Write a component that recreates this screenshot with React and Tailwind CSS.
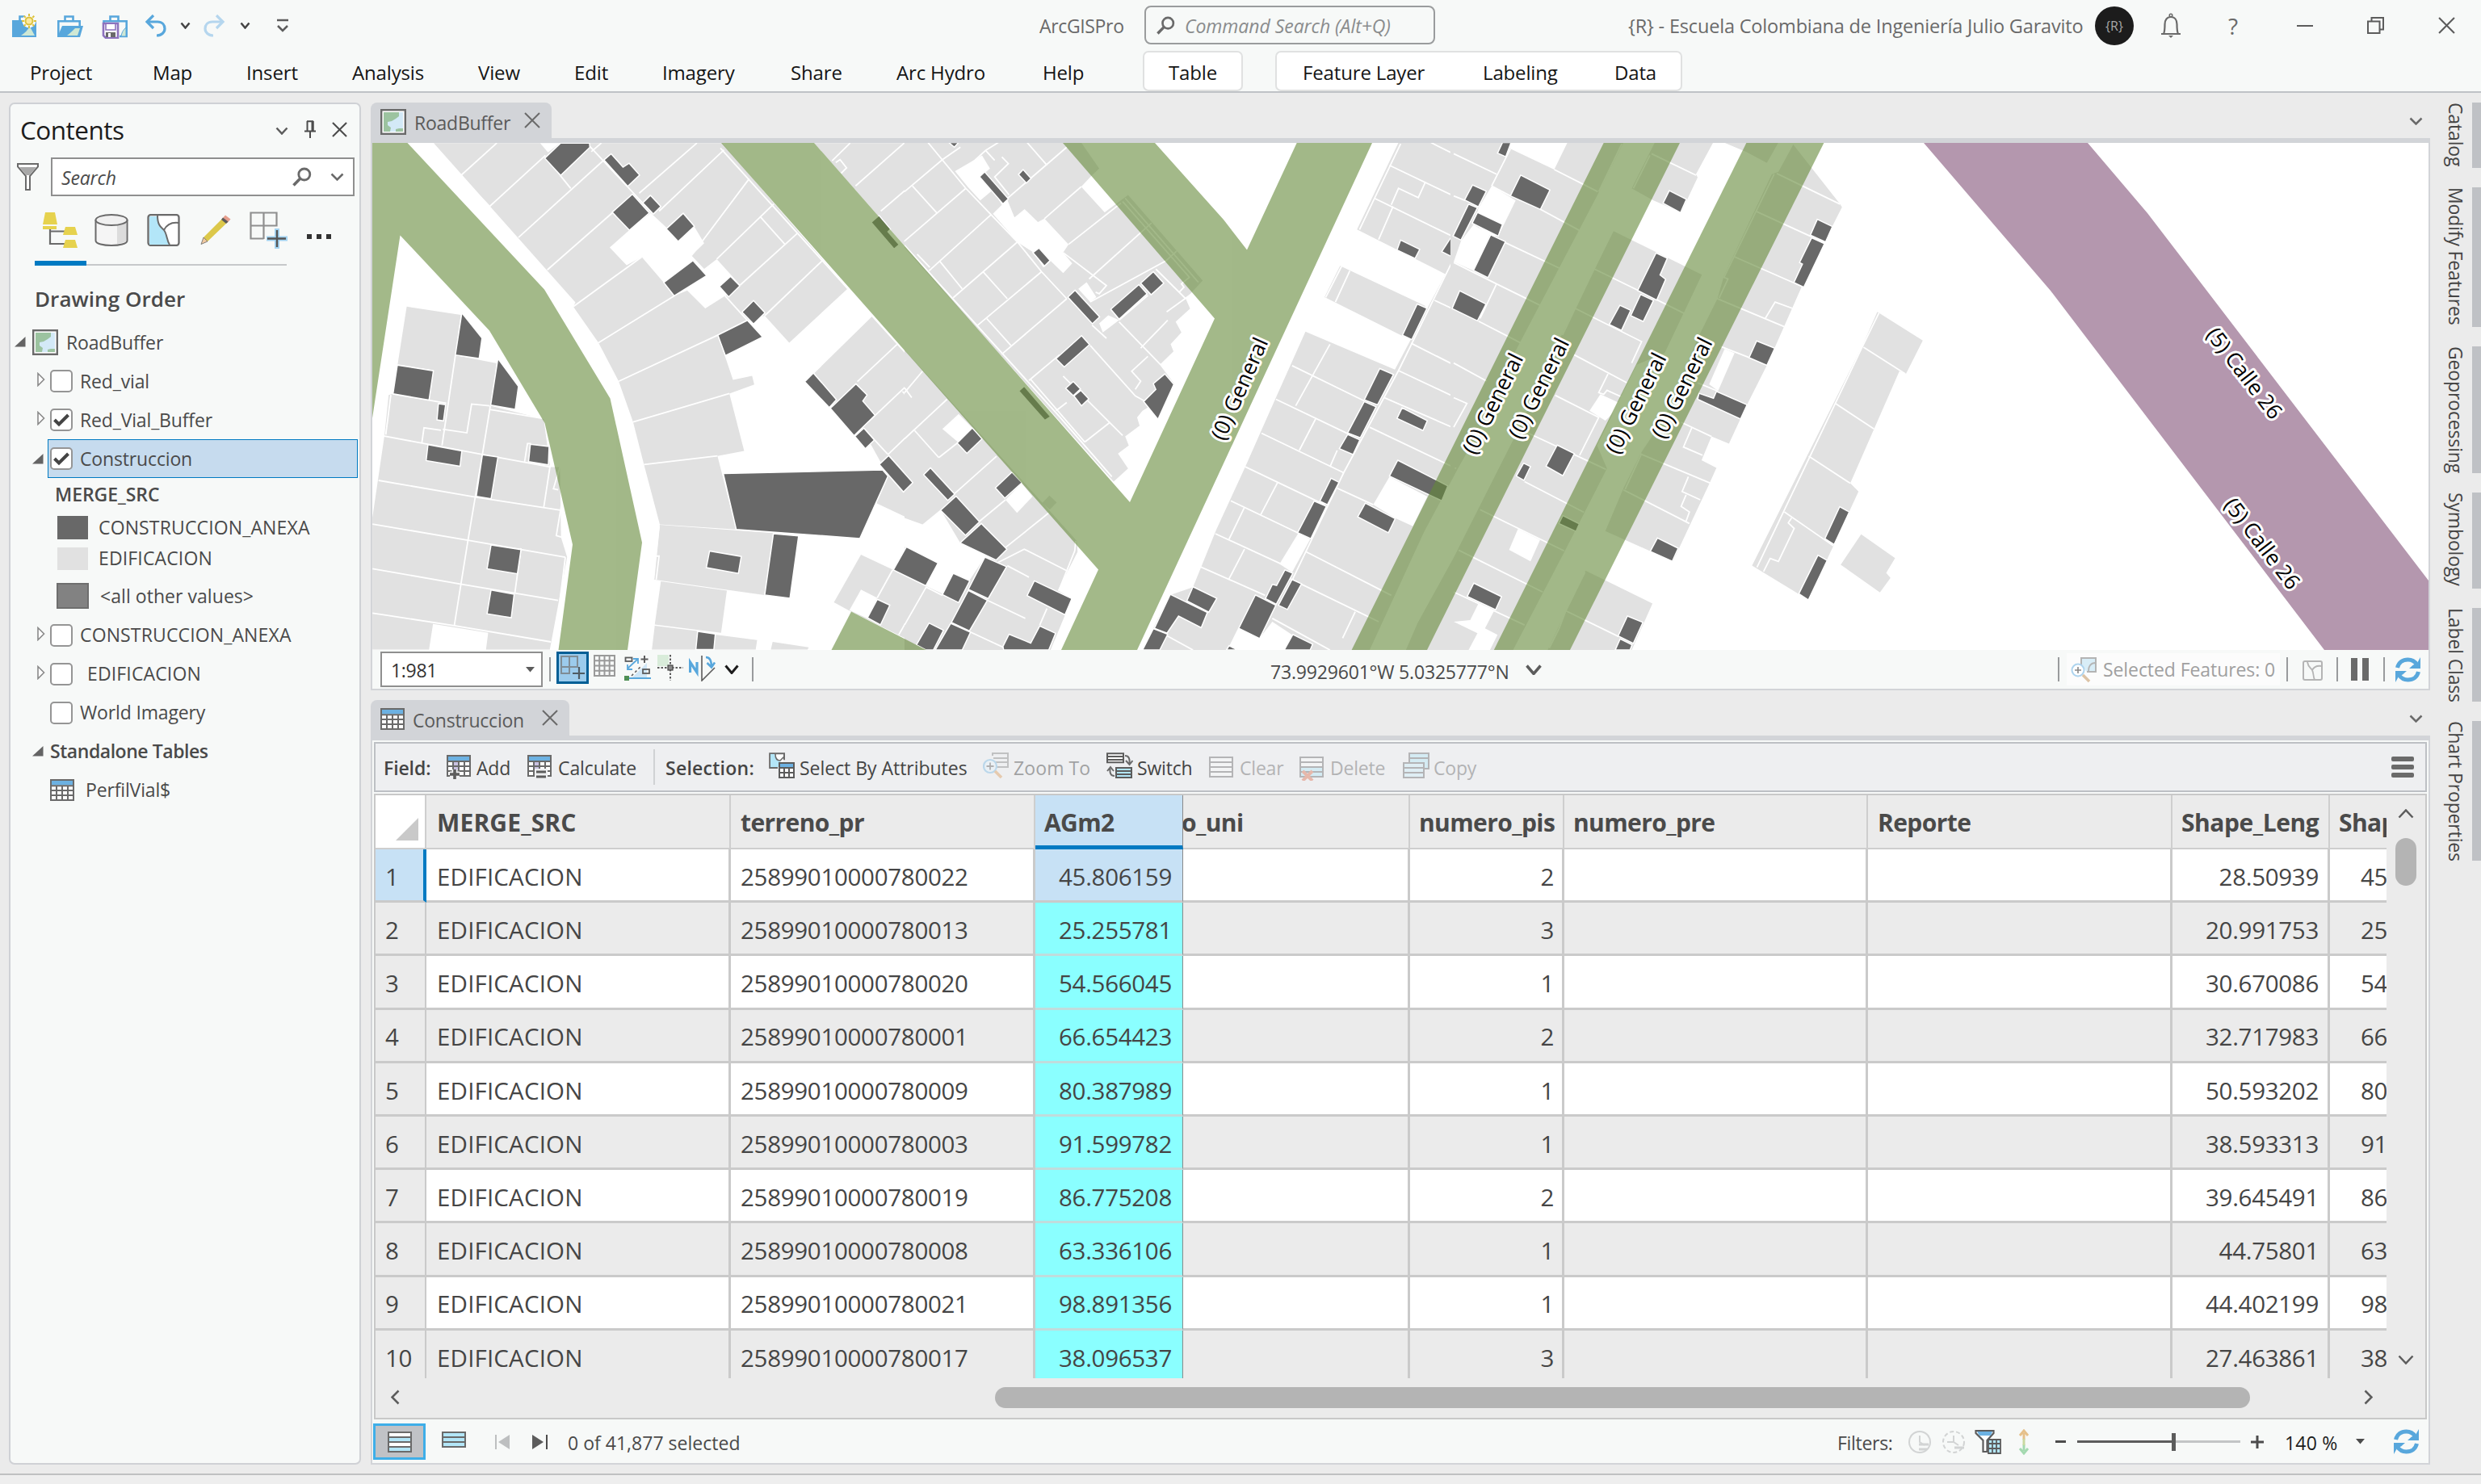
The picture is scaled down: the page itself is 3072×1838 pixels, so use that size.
import React from "react";

const FONT = "font-['Open_Sans','Noto_Sans',sans-serif]";

/* ---------- small glyphs ---------- */
const Chevron = ({ w = 16, h = 9, sw = 2.5, color = "#5c5c5c", dir = "down", className = "" }) => {
  const pts = {
    down: `1.5,1.5 ${w / 2},${h - 1.5} ${w - 1.5},1.5`,
    up: `1.5,${h - 1.5} ${w / 2},1.5 ${w - 1.5},${h - 1.5}`,
    left: `${w - 1.5},1.5 1.5,${h / 2} ${w - 1.5},${h - 1.5}`,
    right: `1.5,1.5 ${w - 1.5},${h / 2} 1.5,${h - 1.5}`,
  };
  return (
    <svg width={w} height={h} viewBox={`0 0 ${w} ${h}`} className={`shrink-0 ${className}`} fill="none" stroke={color} strokeWidth={sw}>
      <polyline points={pts[dir]} />
    </svg>
  );
};

const Cross = ({ s = 20, sw = 2.2, color = "#4c4c4c", className = "" }) => (
  <svg width={s} height={s} viewBox="0 0 20 20" className={`shrink-0 ${className}`} stroke={color} strokeWidth={sw}>
    <path d="M1 1 19 19M19 1 1 19" />
  </svg>
);

const Ico = ({ w = 32, h = 32, vw, vh, className = "", children }) => (
  <svg width={w} height={h} viewBox={`0 0 ${vw || w} ${vh || h}`} className={`shrink-0 ${className}`} fill="none">
    {children}
  </svg>
);

const Magnifier = ({ s = 24, className = "" }) => (
  <Ico w={s} h={s} vw={24} vh={24} className={className}>
    <circle cx="14.8" cy="9" r="7" stroke="#6a6a6a" strokeWidth="2.8" />
    <path d="M9.8 14 1.5 22.5" stroke="#6a6a6a" strokeWidth="3.6" />
  </Ico>
);

const MapThumb = ({ className = "" }) => (
  <Ico className={className}>
    <rect x="1.2" y="1.2" width="29.6" height="29.6" fill="#fff" stroke="#6a6a6a" strokeWidth="2.4" />
    <rect x="4" y="4" width="24" height="24" fill="#9cc3a0" />
    <path d="M23 4h5v20h-5l-4 1v3h-7l1-5-4-3v-4l5-1 5-3 4-3z" fill="#d3e9f7" />
  </Ico>
);

const TableIcon = ({ className = "" }) => (
  <Ico w={30} h={27} className={className}>
    <rect x="1" y="1" width="28" height="25" fill="#fff" stroke="#6a6a6a" strokeWidth="2" />
    <rect x="2" y="2" width="26" height="5.5" fill="#6cb1e2" />
    <path d="M1 8.2h28M1 14h28M1 20h28M8 8v18M15 8v18M22 8v18" stroke="#6a6a6a" strokeWidth="2" />
  </Ico>
);

const Refresh = ({ className = "" }) => (
  <Ico w={33} h={33} className={className}>
    <path d="M3.5 14C5 7.500 10 4 16.500 4c5 0 8.500 2 11 6" stroke="#58a7dc" strokeWidth="5" />
    <path d="M32 1v14H18l5-4.500 4.500-1.500z" fill="#58a7dc" />
    <path d="M29.500 19C28 25.500 23 29 16.500 29c-5 0-8.500-2-11-6" stroke="#58a7dc" strokeWidth="5" />
    <path d="M1 32V18h14l-5 4.500-4.500 1.500z" fill="#58a7dc" />
  </Ico>
);

const Vsep = ({ className = "" }) => <div className={`w-[2px] shrink-0 bg-[#999b9d] ${className}`} />;

/* ---------- title bar ---------- */
const Project = ({ variant }) => (
  <Ico w={34} h={32}>
    <path d="M10.500 10V4.500h10V10" stroke="#58a7dc" strokeWidth="2.6" />
    {variant === "new" && (
      <>
        <path d="M1 30V9h30v21z" fill="#58a7dc" />
        <path d="M12 28c5-3 8-7 11-11l6 11z" fill="#cfe8d4" />
        <circle cx="22" cy="10" r="8.500" fill="#f7f9f8" />
        <circle cx="22" cy="10" r="4.500" fill="#fbe9a0" stroke="#dcc23c" strokeWidth="2" />
        <path d="M22 1v3M22 16v3M13 10h3M28 10h3M15.700 3.700l2 2M26.300 14.300l2 2M15.700 16.300l2-2M26.300 5.700l2-2" stroke="#dcc23c" strokeWidth="2" />
      </>
    )}
    {variant === "open" && (
      <>
        <path d="M2.300 30V10.300h26.400V17" stroke="#58a7dc" strokeWidth="2.600" />
        <path d="M7 16h26l-4 14H1z" fill="#58a7dc" />
        <path d="M13 28c4-3 7-6 10-9l6 0-3 9z" fill="#cfe8d4" />
      </>
    )}
    {variant === "save" && (
      <>
        <path d="M2.500 14V10.300h28.200V29H22" stroke="#58a7dc" strokeWidth="2.600" />
        <path d="M24 29c1-6 3-8 6-11v11z" fill="#cfe8d4" stroke="#58a7dc" />
        <path d="M2 13h18v18H5l-3-3z" fill="#fff" stroke="#8d72bd" strokeWidth="2.600" />
        <path d="M5 14v7h12v-7" fill="#fff" stroke="#8d72bd" strokeWidth="1.600" />
        <rect x="5" y="24" width="12" height="6" fill="#6a6a6a" />
        <rect x="8" y="25" width="3" height="5" fill="#fff" />
      </>
    )}
  </Ico>
);

const Undo = ({ color, flip }) => (
  <Ico w={28} h={28} className={flip ? "-scale-x-100" : ""}>
    <path d="M3 9h13c6 0 9 4 9 8.500S21 26 15 26" stroke={color} strokeWidth="3.200" />
    <path d="M11 1 3 9l8 8" stroke={color} strokeWidth="3.200" />
  </Ico>
);

const TitleBar = () => (
  <div className="flex h-[63px] items-center text-[#6a6a6a]">
    <div className="flex w-[1287px] items-center pl-[14px]">
      <Project variant="new" />
      <div className="w-[22px]" />
      <Project variant="open" />
      <div className="w-[22px]" />
      <Project variant="save" />
      <div className="w-[19px]" />
      <Undo color="#58a7dc" />
      <Chevron w={13} h={9} className="ml-[16px]" color="#444" />
      <div className="w-[15px]" />
      <Undo color="#b5d6ee" flip />
      <Chevron w={13} h={9} className="ml-[18px]" color="#444" />
      <Ico w={16} h={18} className="ml-[32px]">
        <path d="M1 2h14" stroke="#5c5c5c" strokeWidth="2.500" />
        <path d="M2 9l6 6 6-6" stroke="#5c5c5c" strokeWidth="2.500" />
      </Ico>
    </div>
    <span className="w-[130px] pt-[2px] text-[23px] tracking-[-0.35px]">ArcGISPro</span>
    <div className="-mt-[1px] flex h-[48px] w-[360px] items-center rounded-[8px] border-2 border-[#9a9c9d] bg-[#f7f9f8] pl-[13px]">
      <Magnifier s={23} />
      <span className="ml-[12px] pt-[3px] text-[23px] italic tracking-[-0.050px] text-[#8a8c8d]">Command Search (Alt+Q)</span>
    </div>
    <span className="ml-[239px] w-[578px] whitespace-nowrap pt-[3px] text-[23.500px] tracking-[-0.170px]">{"{R}"} - Escuela Colombiana de Ingeniería Julio Garavito</span>
    <div className="flex h-[48px] w-[48px] items-center justify-center rounded-full bg-[#1c1c1c] text-[16px] text-[#a8a8a8]">{"{R}"}</div>
    <Ico w={28} h={32} className="ml-[32px]">
      <path d="M2 26h24M5 26c1-2 1.500-4 1.500-12 0-5 2.500-9 7.500-9s7.500 4 7.500 9c0 8 .5 10 1.500 12" stroke="#6a6a6a" strokeWidth="2.200" />
      <circle cx="14" cy="3" r="1.800" stroke="#6a6a6a" strokeWidth="1.500" />
      <path d="M11 28h6l-3 3z" fill="#6a6a6a" />
    </Ico>
    <span className="ml-[57px] w-[85px] text-[28px]">?</span>
    <div className="h-[2px] w-[20px] bg-[#5c5c5c]" />
    <Ico w={21} h={21} className="ml-[67px]">
      <path d="M1 5.500h14.500V20H1zM5.500 5V1H20v14.500h-4" stroke="#5c5c5c" strokeWidth="2" />
    </Ico>
    <Cross s={21} className="ml-[67px]" sw={2} color="#5c5c5c" />
  </div>
);

const tabs = [
  ["Project", "w-[152px]"],
  ["Map", "w-[116px]"],
  ["Insert", "w-[131px]"],
  ["Analysis", "w-[156px]"],
  ["View", "w-[119px]"],
  ["Edit", "w-[109px]"],
  ["Imagery", "w-[159px]"],
  ["Share", "w-[131px]"],
  ["Arc Hydro", "w-[181px]"],
  ["Help", "w-[124px]"],
];

const TabBar = () => (
  <div className="flex h-[50px] items-center pl-[37px] text-[24px] tracking-[-0.150px] text-[#151515]">
    {tabs.map(([t, w]) => (
      <span key={t} className={`${w} whitespace-nowrap pt-[4px]`}>{t}</span>
    ))}
    <div className="flex h-[50px] w-[124px] items-center justify-center rounded-[7px] border-2 border-[#e0e1e1] bg-white pt-[3px]">Table</div>
    <div className="ml-[40px] flex h-[50px] w-[504px] items-center rounded-[7px] border-2 border-[#e0e1e1] bg-white pl-[32px] pt-[3px]">
      <span className="w-[223px]">Feature Layer</span>
      <span className="w-[163px]">Labeling</span>
      <span>Data</span>
    </div>
  </div>
);

/* ---------- contents pane ---------- */
const Check = ({ on }) => (
  <div className="flex h-[28px] w-[28px] shrink-0 items-center justify-center rounded-[5px] border-2 border-[#959595] bg-white">
    {on && (
      <Ico w={22} h={20}>
        <path d="M2.500 10 8 15.500 19.500 4" stroke="#444" strokeWidth="4" />
      </Ico>
    )}
  </div>
);

const OpenTri = () => (
  <Ico w={14} h={13}>
    <path d="M13.500 0v12.500H0z" fill="#646464" />
  </Ico>
);
const ShutTri = () => (
  <Ico w={10} h={18}>
    <path d="M1 1.500 8.500 9 1 16.500z" fill="#fff" stroke="#8a8a8a" strokeWidth="1.600" />
  </Ico>
);

const Layer = ({ open, on, name, selected, bare, indent, caps }) => (
  <div className="flex h-[48px] items-center">
    <div className="flex w-[46px] justify-end">
      {bare ? null : open ? <div className="mr-[5px]"><OpenTri /></div> : <div className="-mt-1 mr-[3px]"><ShutTri /></div>}
    </div>
    <div className={`flex h-[48px] w-[384px] items-center border-[1.500px] pl-[2px] ${selected ? "border-[#007ac2] bg-[#c6dbee]" : "border-transparent"}`}>
      <Check on={on} />
      <span className={`whitespace-nowrap ${indent ? "ml-[18px]" : "ml-[9px]"} ${caps ? "tracking-[0.140px]" : ""}`}>{name}</span>
    </div>
  </div>
);

const Contents = () => (
  <div className="flex h-[1687px] w-[436px] shrink-0 flex-col rounded-[7px] border-[2px] border-[#cfd1d5] bg-[#f7f9f8] text-[23px] tracking-[-0.150px] text-[#4a4a4a]">
    <div className="flex h-[66px] items-center pl-[12px]">
      <span className="w-[316px] pb-[2px] text-[31.500px] tracking-[-0.500px] text-[#1c1c1c]">Contents</span>
      <Chevron w={16} h={10} />
      <Ico w={14} h={22} className="-mt-1 ml-[20px]">
        <path d="M3 1.200h8M3.500 1v12.500M10.500 1v12.500M0 13.500h14M7 14v8" stroke="#4c4c4c" strokeWidth="2" />
        <path d="M8.500 1h3v12h-3z" fill="#4c4c4c" />
      </Ico>
      <Cross s={19} className="-mt-[4px] ml-[20px]" />
    </div>
    <div className="flex h-[48px] items-center pl-[8px]">
      <Ico w={27} h={34}>
        <path d="M1 1h25v3.500L16 16v17h-5V16L1 4.500z" fill="#fff" stroke="#6a6a6a" strokeWidth="2" />
        <path d="M3 5h21l-8.500 10h-4z" fill="#a8a8a8" />
      </Ico>
      <div className="ml-[15px] flex h-[48px] w-[376px] items-center border-2 border-[#8f8f8f] bg-white pl-[11px]">
        <span className="w-[286px] pt-[2px] italic">Search</span>
        <Magnifier s={24} />
        <Chevron w={17} h={10} className="ml-[23px]" color="#6a6a6a" />
      </div>
    </div>
    <div className="flex h-[80px] items-center pl-[39px]">
      <Ico w={46} h={46} className="mt-1">
        <path d="M4 1h12l3 15H1zM1 18h17v4H1z" fill="#e6d24e" />
        <path d="M10 22v18h18M10 24.500h18" stroke="#6a6a6a" strokeWidth="2.200" />
        <path d="M29 19h12l3 10H26zM29 35h12l3 10H26z" fill="#e6d24e" />
      </Ico>
      <Ico w={42} h={40} className="ml-[19px] mt-1">
        <path d="M1.500 7v26c0 8 39 8 39 0V7" fill="#f5f5f5" stroke="#6a6a6a" strokeWidth="2" />
        <path d="M28 14v23c6-1 11-2 11-4V8c0 3-5 5-11 6z" fill="#dcdcdc" />
        <ellipse cx="21" cy="7.500" rx="19.500" ry="6.500" fill="#f0f0f0" stroke="#6a6a6a" strokeWidth="2" />
      </Ico>
      <Ico w={42} h={40} className="ml-[23px] mt-1">
        <rect x="1.500" y="1.200" width="38" height="37.600" rx="3" fill="#fff" stroke="#6a6a6a" strokeWidth="2.300" />
        <path d="M3 3h10c0 12 4 14 8 18 4 5 2 12 7 17H3z" fill="#b3e6f8" />
        <path d="M13 2c0 12 4 14 8 18 4 5 3 12 7 18M21 20c3-6 9-10 18-9" stroke="#6a6a6a" strokeWidth="2" />
      </Ico>
      <Ico w={40} h={40} className="ml-[23px] mt-1">
        <path d="M5 29 29 5l6 5L10 34z" fill="#dcc84a" />
        <path d="M5 29 2 37.500 10 34z" fill="#f0c9a0" stroke="#6a6a6a" strokeWidth=".8" />
        <path d="M28 6l4-4.500 6.500 5L34.500 11z" fill="#e59d8c" />
        <path d="M27 7l2-2.500 6.500 5L33 12z" fill="#5c5c5c" />
      </Ico>
      <Ico w={48} h={46} className="ml-[22px] mt-1">
        <path d="M1.500 1.500h32v16h-32zM17.500 1v33M1.500 17v16.500h16" stroke="#8f8f8f" strokeWidth="2.200" />
        <path d="M34 21v25M21 33.500h26" stroke="#a4d4f2" strokeWidth="6" />
        <path d="M34 23v21M22 33.500h23" stroke="#555" strokeWidth="2.400" />
      </Ico>
      <div className="ml-[23px] mt-[20px] flex gap-[6px]">
        <div className="size-[6px] bg-[#333]" />
        <div className="size-[6px] bg-[#333]" />
        <div className="size-[6px] bg-[#333]" />
      </div>
    </div>
    <div className="ml-[30px] flex h-[6px] w-[312px] items-end">
      <div className="h-[6px] w-[64px] bg-[#007ac2]" />
      <div className="h-[2px] flex-1 bg-[#c6c8ca]" />
    </div>
    <div className="flex h-[70px] items-center pl-[30px] pt-[11px] text-[26px] font-semibold tracking-[0.050px]">Drawing Order</div>
    <div className="flex h-[49px] items-center pl-[5px]">
      <OpenTri />
      <MapThumb className="ml-[8px]" />
      <span className="ml-[10px] pt-[2px]">RoadBuffer</span>
    </div>
    <Layer name="Red_vial" />
    <Layer name="Red_Vial_Buffer" on />
    <Layer name="Construccion" on open selected />
    <div className="flex h-[40px] items-center pl-[55px] text-[23px] font-semibold tracking-[-0.050px]">MERGE_SRC</div>
    <div className="flex h-[42px] items-center pl-[58px]">
      <div className="h-[29px] w-[38px] bg-[#686868]" />
      <span className="ml-[13px] tracking-[0.140px]">CONSTRUCCION_ANEXA</span>
    </div>
    <div className="flex h-[35px] items-center pl-[58px]">
      <div className="h-[28px] w-[38px] bg-[#e1e1e1]" />
      <span className="ml-[13px] tracking-[0.140px]">EDIFICACION</span>
    </div>
    <div className="mt-[4.500px] flex h-[49px] items-center pl-[57px]">
      <div className="h-[32px] w-[40px] border-2 border-[#6e6e6e] bg-[#828282]" />
      <span className="ml-[14px] tracking-[0.050px]">&lt;all other values&gt;</span>
    </div>
    <Layer name="CONSTRUCCION_ANEXA" caps />
    <Layer name="EDIFICACION" indent caps />
    <Layer name="World Imagery" bare />
    <div className="flex h-[48px] items-center pl-[27px]">
      <OpenTri />
      <span className="ml-[8px] text-[23px] font-semibold tracking-[-0.450px]">Standalone Tables</span>
    </div>
    <div className="flex h-[48px] items-center pl-[49px]">
      <TableIcon />
      <span className="ml-[14px]">PerfilVial$</span>
    </div>
  </div>
);

/* ---------- map geometry ---------- */
const west = {
  grey: [
    "195,16 995,16 1343,420 1181,570 1113,495 1065,508 983,549 1025,673 1078,662 1084,686 1015,711 1056,870 982,884 1034,1088 822,1074 778,908 748,790 708,677 652,570 582,470 588,458",
    "1250,655 1410,498 1575,680 1575,1062 1550,1075 1423,1015 1455,938 1395,830 1300,740",
    "1250,16 1575,16 1575,385",
    "1380,1158 1575,1250 1575,1400 1533,1405 1345,1312 1305,1290",
    "822,1075 1137,1098 1112,1270 805,1227",
    "825,1232 1008,1258 992,1375 808,1352",
    "808,1355 925,1370 925,1421 800,1421",
    "975,1380 1092,1395 1088,1421 970,1421",
    "1135,1400 1235,1415 1232,1421 1130,1421",
    "120,470 270,493 255,605 370,627 352,745 500,782 518,915 545,915 548,1110 565,1165 517,1421 340,1421 346,1375 193,1350 182,1421 25,1421 25,1055 58,830 70,715 82,712 95,630",
  ],
  white: [
    "683,306 737,258 797,210 845,255 873,288 918,248 945,294 910,328 945,365 980,338 1045,410 1003,440 948,475 898,425 862,440 833,403 772,332 730,355",
    "490,16 512,42 545,16",
    "1380,1255 1425,1278 1398,1335 1348,1312",
  ],
  lines: [
    "268,108 370,16", "350,192 505,50", "430,278 665,65", "510,368 690,210", "582,470 772,332", "652,570 862,440", "708,677 985,548 1065,508",
    "748,790 1015,711", "778,908 982,884", "625,22 735,140 800,210", "545,105 575,142", "765,155 925,16", "820,205 1000,35", "910,328 1070,115",
    "980,338 1138,185", "1045,410 1205,265", "1003,440 1065,508", "1113,495 1275,340", "1100,220 1170,298", "990,30 1343,420", "268,108 350,192",
    "632,40 660,16",
    "1480,575 1370,678", "1548,650 1400,790", "1495,705 1560,778", "1575,765 1455,880", "1528,815 1568,860", "1523,958 1568,925", "1390,810 1455,880",
    "1365,135 1500,16", "1435,205 1575,85", "1500,290 1575,228", "1520,135 1568,185", "1300,65 1350,16", "1310,70 1322,62 1340,85 1325,100",
    "1468,1200 1425,1278", "1560,1248 1485,1380",
    "95,632 195,648", "255,605 218,855", "82,712 230,738", "52,828 330,880 518,915", "352,745 330,880", "350,755 495,780", "220,810 287,820 300,740 350,745",
    "162,848 168,806 215,813", "42,952 310,998 550,1035", "330,880 290,1118 252,1355", "25,1073 290,1118 560,1165", "25,1197 272,1240 420,1265 540,1285",
    "25,1320 252,1355 520,1400", "518,910 500,1028", "437,1140 420,1265", "447,900 455,850 465,850", "545,915 527,975 540,978", "555,985 535,1105 552,1110",
    "560,1165 545,1285", "76,715 62,825", "820,1080 805,1227", "812,1162 820,1162 812,1227",
  ],
  dark: [
    "503,58 547,16 627,16 628,28 547,106", "667,63 687,46 720,83 737,72 766,105 733,136", "690,208 746,158 793,210 738,258", "775,182 796,161 825,192 804,213",
    "840,254 887,211 918,247 873,289", "833,403 914,342 952,384 862,440", "987,414 1018,386 1044,412 1013,443", "1050,485 1082,453 1114,487 1082,518",
    "983,549 1065,508 1107,554 1004,606", "998,933 1440,923 1455,940 1377,1113 1034,1088", "1137,1100 1207,1106 1183,1279 1113,1270",
    "960,1148 1048,1163 1040,1210 951,1194", "927,1371 976,1378 972,1421 922,1421", "1224,678 1248,654 1312,728 1292,750",
    "1295,752 1366,684 1397,715 1385,732 1419,771 1361,828", "1363,830 1388,807 1417,840 1392,864", "1431,908 1457,883 1524,958 1498,984",
    "1398,1333 1425,1282 1460,1298 1434,1353", "1408,236 1430,217 1462,255 1455,262 1486,298 1472,310",
    "273,487 329,557 321,614 255,604", "373,614 430,691 421,755 353,743", "94,632 194,648 182,729 82,712", "208,739 228,742 222,787 204,784",
    "179,853 273,870 268,913 174,897", "330,881 373,887 354,1003 313,996", "463,852 515,858 513,909 458,900", "354,1131 437,1144 427,1211 343,1197",
    "354,1256 418,1268 410,1333 343,1322",
  ],
};

const middle = {
  grey: [
    "0,16 490,16 540,95 520,115 490,150 555,228 620,175 827,435 780,490 792,520 752,560 768,592 738,628 746,650 708,690 748,748 705,800 660,830 645,850 652,875 612,908 622,935 592,960 620,1005 580,1045 0,335",
    "0,645 478,1225 480,1258 425,1375 464,1400 405,1556 0,1556",
    "382,1110 402,1087 422,1108 403,1130",
    "1370,16 1530,16 1530,380 1500,415 1255,280",
    "1208,390 1445,512 1385,605 1165,485",
    "1112,590 1360,705 1520,375 1640,430 1640,800 1535,1005 1440,1200 1290,1556 660,1556 735,1390 800,1365 865,1190 945,1000 1030,790",
  ],
  white: [
    "140,103 215,55 237,95 212,118 285,190 305,243 333,218 370,257 388,247 455,325 440,350 465,383 440,412 405,375 385,395 358,350 315,320 245,232 270,205 245,160 210,192 175,150",
    "482,460 505,440 532,485 515,500", "540,565 565,540 595,555 550,592",
    "0,1155 50,1175 100,1130 155,1232 255,1282 222,1275 180,1345 135,1322 105,1385 60,1362 92,1292 0,1243",
    "105,885 150,840 188,882 148,925", "280,1100 325,1050 355,1090 312,1140",
    "1345,1030 1450,1090 1410,1180 1360,1155 1300,1115", "1093,1200 1125,1220 1075,1320 1040,1295", "925,1490 985,1520 1020,1470 1075,1510 1055,1556 895,1556",
  ],
  lines: [
    "65,16 170,155 240,235 315,320 380,408 450,490", "0,165 105,68 155,30", "0,315 170,155", "22,148 90,230", "68,405 240,235", "135,487 313,318", "97,375 160,460",
    "200,573 380,408", "218,408 285,490", "270,658 450,490", "228,550 295,632", "345,738 430,660", "0,328 430,848 575,1030", "35,355 70,395",
    "270,200 450,30", "388,247 490,150", "455,325 600,200", "512,430 685,260", "440,350 560,450 540,475 530,470", "515,500 725,375 755,345", "595,555 675,480",
    "515,632 640,785 665,800", "595,560 710,690", "655,640 730,555", "697,400 780,490", "727,530 822,455", "675,665 630,710 655,740 640,765", "440,725 605,905",
    "350,735 500,925", "420,830 450,805", "500,925 570,865", "340,16 395,85", "180,85 225,40 260,16", "270,60 288,80 250,120 290,175", "225,40 250,70",
    "612,185 815,440", "605,195 790,425 768,445 775,455 762,470", "520,570 560,610",
    "0,775 50,710", "0,915 118,795", "28,890 95,972", "95,972 150,925", "135,1085 255,968", "205,1168 280,1100", "260,1290 332,1250 455,1318", "285,1300 345,1335",
    "230,1405 335,1460", "180,1500 290,1556", "395,1430 375,1480", "0,1480 60,1365 105,1390", "475,1225 472,1255 430,1370", "410,1138 478,1220", "0,760 20,790", "280,1245 400,1140",
    "1075,693 1275,800", "1030,795 1240,905", "990,898 1218,1018", "945,1000 1165,1115", "905,1103 1090,1200", "862,1203 1055,1300", "820,1303 1000,1390",
    "1180,628 1085,815", "1140,855 1095,950", "1035,1047 988,1145", "942,1125 900,1220", "943,1250 900,1340", "1370,708 1568,810", "1330,790 1540,890",
    "1290,880 1530,1005", "1405,625 1568,715", "1470,495 1568,545", "1200,1065 1300,1115", "1112,1257 1350,1390", "1070,1340 1315,1470",
    "1520,375 1370,708 1218,1018 1055,1390", "1250,1440 1215,1520", "1345,85 1565,200", "1303,185 1515,298", "1445,135 1425,183 1370,155 1350,205",
    "1355,210 1315,310", "1376,20 1262,280", "1460,16 1568,75", "1235,405 1195,500", "1555,810 1520,890", "715,1505 800,1556", "1212,392 1168,486", "1200,950 1180,1000",
    "1020,1460 1180,1556",
  ],
  dark: [
    "123,16 150,16 138,30", "208,120 222,105 288,187 273,202", "316,113 329,98 351,125 338,139", "356,350 373,336 404,374 388,391", "453,485 473,464 541,545 521,566",
    "572,522 650,447 673,475 595,552", "655,443 690,408 719,443 684,478", "420,672 491,602 513,629 443,697", "447,762 468,741 488,764 468,784",
    "470,785 489,768 511,794 491,815", "663,802 697,765 690,748 722,718 747,750 703,856", "317,770 332,755 405,848 389,859",
    "146,928 188,882 215,915 173,959", "252,1064 298,1016 326,1048 278,1095", "53,1024 72,1003 139,1083 120,1102", "-70,993 -44,966 23,1048 -3,1076",
    "100,1132 143,1089 208,1167 169,1208", "154,1231 213,1172 284,1250 254,1283", "5,1243 93,1292 59,1361 -31,1313", "135,1323 181,1346 150,1412 105,1388",
    "223,1274 283,1303 232,1400 177,1372", "177,1375 230,1405 180,1498 130,1472", "128,1475 183,1502 160,1556 85,1556", "33,1540 68,1474 108,1496 80,1556 60,1556",
    "360,1346 464,1400 445,1449 340,1391", "273,1545 290,1508 350,1535 375,1483 419,1505 400,1556 275,1556",
    "1376,312 1429,340 1416,368 1366,342", "1518,300 1544,314 1521,364 1490,347", "1422,506 1449,519 1407,614 1381,601", "1318,702 1356,720 1312,812 1275,797",
    "1275,802 1308,818 1264,912 1229,897", "1229,902 1263,918 1244,963 1206,945", "1380,821 1450,860 1438,890 1366,853", "1368,980 1507,1058 1490,1103 1345,1028",
    "1278,1110 1361,1157 1342,1200 1257,1152", "1183,1035 1205,1047 1173,1115 1152,1104", "1136,1104 1170,1120 1127,1218 1090,1200",
    "1055,1313 1077,1323 1031,1417 1001,1400 1020,1357 1032,1360", "1075,1342 1101,1355 1062,1433 1037,1420", "973,1389 1030,1420 985,1521 927,1490",
    "800,1364 866,1399 844,1441 783,1407", "737,1387 840,1442 823,1488 760,1453 728,1505 693,1490", "690,1491 730,1508 708,1556 660,1556",
    "1077,1509 1132,1538 1125,1556 1053,1556", "900,1543 925,1556 893,1556",
  ],
};

const east = {
  grey: [
    "-10,16 160,16 172,35 305,98 345,16 515,16 440,168 200,625 0,1010 -10,1010",
    "610,16 787,16 735,112 740,122 690,228 602,190 540,155",
    "485,285 753,417 640,655 555,690 435,935 465,1005 340,1250 180,1556 -145,1556 -110,1475 0,1275 205,870 320,615",
    "820,16 985,16 950,78 888,45",
    "1030,22 1172,203 1178,212 1055,455 950,692 888,815 835,930 782,908 752,980 797,1003 775,1052 665,1287 460,1195 515,1065 570,955 640,850 740,610 800,490 820,420 965,112 985,105",
    "400,1315 603,1415 540,1556 285,1556",
    "1285,530 1423,617 1372,718 1352,710 1203,1050 1228,1075 1152,1240 1075,1403 905,1300 1240,632",
    "1236,1205 1339,1277 1312,1322 1325,1337 1293,1381 1174,1297",
  ],
  white: [
    "75,215 115,148 188,192 135,300 100,295 62,260", "22,315 60,265 110,295 60,405 0,378", "445,780 510,810 460,860 412,830", "195,1188 262,1222 233,1287 168,1252",
    "75,1415 122,1438 95,1490 133,1510 110,1556 45,1556 72,1505 0,1470 50,1465", "822,642 852,655 802,770 775,750",
  ],
  lines: [
    "0,50 130,112", "172,35 115,148", "115,148 172,178", "0,178 35,192", "0,380 130,445 262,510", "262,218 380,282", "157,320 320,397", "130,445 80,550", "75,558 205,625",
    "0,685 100,740", "305,98 437,165", "0,790 40,808 0,880", "510,20 440,165",
    "600,50 735,115", "595,55 545,155", "427,400 560,465 700,535", "370,520 570,620 540,685", "365,660 525,745", "308,783 440,850 382,965", "220,895 462,1008", "215,1045 395,1138",
    "80,1130 335,1255", "15,1253 270,1380", "0,1380 215,1480", "468,718 440,775 455,780 465,768 525,795", "478,290 330,600", "700,535 650,650",
    "980,110 1172,203", "918,225 1125,320", "850,362 1062,455", "795,488 1003,575", "945,550 975,500 1030,520", "740,745 800,770", "810,635 895,668",
    "722,882 697,940 755,965", "565,960 780,1050", "515,1070 715,1172", "712,1030 693,1075 748,1100", "705,1085 690,1120 715,1137 705,1165", "972,112 820,425 832,430 805,488",
    "690,865 782,908", "570,960 520,1068", "340,1437 500,1515", "398,1320 340,1437 320,1490 290,1550",
    "1290,533 1240,635 920,1305", "1243,637 1370,718", "1158,808 1275,885", "1077,968 1203,1050", "1003,1137 1152,1240", "1025,1155 1015,1170 1033,1187 985,1287 960,1278 940,1318",
  ],
  dark: [
    "148,16 174,16 158,59 133,48", "57,145 99,164 75,211 33,190", "203,115 292,160 263,219 172,178", "72,228 148,264 135,300 56,261", "112,296 157,317 104,426 60,404",
    "-2,300 45,203 72,214 22,312", "18,466 98,506 72,557 -5,520", "654,162 706,188 688,229 635,200", "614,351 648,367 626,418 643,431 616,494 558,465",
    "567,477 606,495 575,559 537,541", "504,510 537,525 509,586 472,568", "314,934 366,960 331,1027 280,998", "212,989 233,999 213,1041 190,1028",
    "331,1148 381,1173 371,1196 319,1172", "61,1353 145,1394 127,1434 41,1393", "1103,249 1149,271 1128,318 1082,297",
    "1086,305 1125,323 1062,455 1032,441 1058,385 1049,380", "919,618 974,640 950,692 896,669", "744,777 788,792 797,771 890,812 870,855 740,795",
    "618,1216 681,1247 663,1287 596,1257", "527,1453 574,1472 545,1536 499,1513", "505,1522 541,1540 535,1556 490,1556",
    "1171,1121 1200,1137 1154,1236 1126,1218", "1105,1268 1133,1284 1076,1404 1047,1385",
  ],
};

const Parcels = ({ data, transform }) => (
  <g transform={transform}>
    {data.grey.map((p) => <polygon key={p} points={p} fill="#e1e1e1" />)}
    {data.white.map((p) => <polygon key={p} points={p} fill="#fff" />)}
    {data.lines.map((p) => <polyline key={p} points={p} fill="none" stroke="#fff" strokeWidth="1.800" vectorEffect="non-scaling-stroke" />)}
    {data.dark.map((p) => <polygon key={p} points={p} fill="#686868" stroke="#fff" strokeWidth="1.500" vectorEffect="non-scaling-stroke" />)}
  </g>
);

const labels = [
  ["(0) General", 1536, 482, -66],
  ["(0) General", 1849.5, 500.5, -63.5],
  ["(0) General", 1906.5, 481.5, -63.5],
  ["(0) General", 2026.7, 500, -63.5],
  ["(0) General", 2083.7, 481, -63.5],
  ["(5) Calle 26", 2778, 463, 52.500],
  ["(5) Calle 26", 2800, 674, 52.500],
];

const MapCanvas = () => (
  <svg width="2546" height="628" viewBox="461 177 2546 628" className="block bg-white">
    <Parcels data={west} transform="translate(450 170) scale(0.44643)" />
    <Parcels data={middle} transform="translate(1120 170) scale(0.44643 0.40816)" />
    <Parcels data={east} transform="translate(1800 170) scale(0.40816)" />
    <g fill="#668a3a" opacity="0.6">
      <path d="M461 177H504.500L674 358.500 755.500 493.500 795 672 777 805H691.500L709 674.500 674.500 524 606 409.500 495.500 291.500 461 518Z" />
      <path d="M893 177H1008L1399 622 1504 394.500 1316 177H1430L1515 272 1544 309.600 1605.700 177H1699L1408 805H1314L1360 705.500Z" />
      <path d="M1985.700 177H2080L1800 738.600 1767 805H1673.600Z" />
      <path d="M2162.400 177H2258.400L1944 805H1849.800Z" />
      <path d="M1054 757.500 1147 805H1029.500Z" />
    </g>
    <path d="M2382 177H2585L2659 264 3007 719V805H2878L2539 360Z" fill="#b497ae" />
    <g fontFamily="'Open Sans','Noto Sans',sans-serif" fontSize="26.500" textAnchor="middle" fill="#000" stroke="#fff" strokeWidth="6" strokeLinejoin="round" paintOrder="stroke">
      {labels.map(([t, x, y, a]) => (
        <text key={`${x}`} transform={`translate(${x} ${y}) rotate(${a})`} y="8">{t}</text>
      ))}
    </g>
  </svg>
);

const MapStatus = () => (
  <div className="flex h-[48px] items-center bg-[#f7f9f8] pl-[10px] text-[23px] tracking-[-0.300px] text-[#4a4a4a]">
    <div className="flex h-[44px] w-[201px] items-center border-2 border-[#8f8f8f] bg-white pl-[11px] text-[#333]">
      <span className="w-[167px] pt-[3px]">1:981</span>
      <Ico w={11} h={7}><path d="M0 0h11L5.500 6.500z" fill="#5c5c5c" /></Ico>
    </div>
    <Vsep className="ml-[8px] h-[30px]" />
    <div className="-mt-[4px] ml-[7px] flex h-[40px] w-[40px] items-center justify-center border-[3px] border-[#005e95] bg-[#9ccbec]">
      <Ico w={32} h={32}>
        <path d="M2 2h20v13H2zM12 2v20M2 15v8h11" stroke="#7f8c95" strokeWidth="2" />
        <path d="M24 15v15M16 23h15" stroke="#4f5b63" strokeWidth="2.200" />
      </Ico>
    </div>
    <Ico w={28} h={28} className="-mt-2 ml-[6px]">
      <path d="M1 1h25v25H1zM7.200 1v25M13.500 1v25M19.700 1v25M1 7.200h25M1 13.500h25M1 19.700h25" stroke="#9a9a9a" strokeWidth="2" />
    </Ico>
    <Ico w={34} h={32} className="-mt-1 ml-[10px]">
      <path d="M10 28 28 10v18z" fill="#cfe6f6" />
      <path d="M2 29h31" stroke="#58a7dc" strokeWidth="2" />
      <rect x="1.500" y="3.500" width="8" height="4.500" stroke="#5c5c5c" strokeWidth="1.800" />
      <rect x="23" y="18" width="8" height="5" stroke="#5c5c5c" strokeWidth="1.800" />
      <path d="M25 1v9M20.500 5.500h9" stroke="#5c5c5c" strokeWidth="2" />
      <path d="M4 17 17 5M11 5h6v6M4 12v6h6" stroke="#58a7dc" strokeWidth="1.800" />
      <path d="M9 26l12-12" stroke="#5c5c5c" strokeWidth="1.500" strokeDasharray="3 3" />
      <rect x="0" y="26" width="6" height="6" fill="#4f8f54" />
    </Ico>
    <Ico w={34} h={34} className="-mt-1 ml-[6px]">
      <rect x="1" y="1" width="14" height="14" fill="#d9ecda" />
      <path d="M17 1v32M1 17h32" stroke="#5c5c5c" strokeWidth="2" strokeDasharray="2.500 2" />
      <rect x="14" y="14" width="6" height="6" fill="#8a8a8a" stroke="#444" strokeWidth="1.200" />
    </Ico>
    <Ico w={34} h={34} className="-mt-1 ml-[6px]">
      <path d="M1.500 23V10L10 23V10" stroke="#58a7dc" strokeWidth="3.200" />
      <path d="M16 2v31L32 17" stroke="#5c5c5c" strokeWidth="1.600" />
      <path d="M21 4c5 0 7 4 7 12M22.500 11l5.500 5.500 4-6" stroke="#58a7dc" strokeWidth="2.600" />
    </Ico>
    <Chevron w={18} h={12} sw={3} color="#1c1c1c" className="ml-[10px]" />
    <Vsep className="ml-[16px] h-[30px]" />
    <span className="ml-[640px] w-[316px] whitespace-nowrap pt-[6px] text-[23px] tracking-[-0.180px]">73.9929601°W 5.0325777°N</span>
    <Chevron w={20} h={13} sw={3.500} />
    <Vsep className="ml-[639px] h-[30px]" />
    <div className="ml-[9px] flex h-[40px] w-[264px] items-center bg-[#fcfcfc] pl-[5px] text-[#a0a0a0]">
      <Ico w={34} h={34}>
        <path d="M13 12V3h18v17H20" fill="#d8edf7" stroke="#b4b4b4" strokeWidth="2" />
        <path d="M31 9c-7 0-9 5-9 10" stroke="#b4b4b4" strokeWidth="1.800" />
        <circle cx="9" cy="18" r="7.500" fill="#fff" stroke="#aed4ee" strokeWidth="2" />
        <path d="M9 14v8M5 18h8" stroke="#888" strokeWidth="1.600" />
        <path d="M15 24l8 8" stroke="#dcc3a5" strokeWidth="3.500" />
      </Ico>
      <span className="ml-[6px] whitespace-nowrap pt-[1px] tracking-[-0.080px]">Selected Features: 0</span>
    </div>
    <Vsep className="ml-[8px] h-[30px]" />
    <Ico w={25} h={25} className="ml-[18px] mt-[2px]">
      <rect x="1" y="1" width="23" height="23" rx="2" stroke="#b4b4b4" strokeWidth="2" />
      <path d="M6 2c1 6 4 7 6 10 2 4 1 8 3 12M12 12c2-4 6-6 12-5" stroke="#b4b4b4" strokeWidth="1.800" />
    </Ico>
    <Vsep className="ml-[17px] h-[30px]" />
    <div className="ml-[16px] flex gap-[6px]">
      <div className="h-[28px] w-[8px] bg-[#6a6a6a]" />
      <div className="h-[28px] w-[8px] bg-[#6a6a6a]" />
    </div>
    <Vsep className="ml-[18px] h-[30px]" />
    <Refresh className="ml-[12px]" />
  </div>
);

/* ---------- dock tabs ---------- */
const PaneTab = ({ icon, children, width, tail }) => (
  <div className="flex items-center justify-between">
    <div className={`flex h-[44px] items-center rounded-t-[8px] bg-[#d2d4d8] pl-[12px] text-[23px] tracking-[-0.250px] text-[#5a5a5a] ${width}`}>
      <div className="mt-[3px]">{icon}</div>
      <span className="flex-1 pl-[10px] pt-[7px]">{children}</span>
      <Cross s={20} className={tail} color="#6a6a6a" sw={2} />
    </div>
    <Chevron w={17} h={10} className="mr-[9px] mt-[2px]" color="#6a6a6a" />
  </div>
);

/* ---------- attribute table ---------- */
const Rows4 = ({ stroke = "#6a6a6a", fills = ["#fff", "#fff", "#fff", "#fff"] }) => (
  <>
    {fills.map((f, i) => (
      <rect key={i} x="1" y={1 + i * 6} width="28" height="6" fill={f} stroke={stroke} strokeWidth="2" />
    ))}
  </>
);

const Toolbar = () => (
  <div className="mx-[2px] mt-[2px] flex h-[62px] items-center border-2 border-[#bdc0c4] bg-[#eeeff1] pl-[10px] text-[23px] tracking-[-0.200px] text-[#444]">
    <span className="w-[78px] pt-[3px] font-semibold tracking-[-0.100px]">Field:</span>
    <Ico w={31} h={30}>
      <rect x="1" y="1" width="28" height="25" fill="#fff" stroke="#6a6a6a" strokeWidth="2" />
      <rect x="2" y="2" width="26" height="5" fill="#6cb1e2" />
      <rect x="8" y="8" width="8" height="12" fill="#c9c0e0" />
      <path d="M1 8h28M1 14h28M1 20h28M8 8v18M15 8v18M22 8v18" stroke="#6a6a6a" strokeWidth="2" />
      <path d="M10 18v12M4 24h12" stroke="#eeeff1" strokeWidth="7" />
      <path d="M10 18v12M4 24h12" stroke="#5c5c5c" strokeWidth="3.600" />
    </Ico>
    <span className="ml-[6px] w-[63px] pt-[3px]">Add</span>
    <Ico w={31} h={30}>
      <rect x="1" y="1" width="28" height="25" fill="#fff" stroke="#6a6a6a" strokeWidth="2" />
      <rect x="2" y="2" width="26" height="5" fill="#6cb1e2" />
      <rect x="8" y="8" width="8" height="12" fill="#c9c0e0" />
      <path d="M1 8h28M1 14h28M1 20h28M8 8v18M15 8v18M22 8v18" stroke="#6a6a6a" strokeWidth="2" />
      <rect x="9" y="17" width="16" height="13" fill="#eeeff1" />
      <path d="M11 21h12M11 27h12" stroke="#5c5c5c" strokeWidth="3" />
    </Ico>
    <span className="ml-[7px] w-[118px] pt-[3px] tracking-[-0.100px]">Calculate</span>
    <div className="h-[44px] w-[2px] bg-[#d0d2d4]" />
    <span className="ml-[13px] w-[128px] pt-[3px] font-semibold tracking-[0.250px]">Selection:</span>
    <Ico w={32} h={32} className="-mt-1">
      <path d="M11 19H1.200V1.200H19v8" fill="#fff" stroke="#6a6a6a" strokeWidth="2" />
      <path d="M2 2h5c1 7 5 7 8 10v6H2z" fill="#b3e6f8" />
      <path d="M8 2c0 7 3 8 6 8l5-5" stroke="#6a6a6a" strokeWidth="1.600" />
      <rect x="13" y="13" width="18" height="18" fill="#fff" stroke="#5c5c5c" strokeWidth="2" />
      <rect x="14" y="14" width="16" height="4" fill="#6cb1e2" />
      <path d="M13 19h18M13 25h18M19 19v12M25 19v12" stroke="#5c5c5c" strokeWidth="2" />
    </Ico>
    <span className="ml-[6px] w-[227px] whitespace-nowrap pt-[3px] tracking-[-0.030px]">Select By Attributes</span>
    <div className="flex items-center opacity-45">
      <Ico w={33} h={32} className="-mt-1">
        <path d="M12 4V1h19v17H17M13 7h18M16 12h15" stroke="#8a8a8a" strokeWidth="2" />
        <circle cx="9" cy="17" r="8" fill="#e6f3fa" stroke="#7fbce4" strokeWidth="2.200" />
        <path d="M9 12.500v9M4.500 17h9" stroke="#666" strokeWidth="1.800" />
        <path d="M15 23l8 8" stroke="#dd9f60" strokeWidth="3.600" />
      </Ico>
      <span className="ml-[5px] w-[115px] pt-[3px] tracking-[0.100px]">Zoom To</span>
    </div>
    <Ico w={33} h={32} className="-mt-1">
      <path d="M1 1.200h20v11H1zM1 5h20M1 9h20" fill="#fff" stroke="#5c5c5c" strokeWidth="2" />
      <path d="M12 19h19v12H12zM12 23h19M12 27h19" fill="#b3e6f8" stroke="#5c5c5c" strokeWidth="2" />
      <path d="M23 4c5 0 6 4 5.500 10M24 10l4.500 5 4-5M10 29c-5 0-6-4-5.500-9M1 23l4-5 4 5" stroke="#6a6a6a" strokeWidth="2" />
    </Ico>
    <span className="ml-[5px] w-[89px] pt-[3px]">Switch</span>
    <div className="flex items-center opacity-35">
      <Ico w={30} h={26}><Rows4 stroke="#4a4a4a" /></Ico>
      <span className="ml-[8px] w-[74px] pt-[3px]">Clear</span>
      <Ico w={30} h={30} className="mt-1">
        <Rows4 stroke="#4a4a4a" fills={["#fff", "#fff", "#a5e5f8", "#a5e5f8"]} />
        <path d="M4 18l12 12M16 18 4 30" stroke="#d9532c" strokeWidth="4" />
      </Ico>
      <span className="ml-[8px] w-[90px] pt-[3px]">Delete</span>
      <Ico w={33} h={32} className="-mt-1">
        <path d="M8 1h24v19H8zM8 7h24" fill="#a5e5f8" stroke="#4a4a4a" strokeWidth="2" />
        <path d="M1 13h25v18H1zM1 19h25M1 25h25" fill="#c5eefa" stroke="#4a4a4a" strokeWidth="2" />
      </Ico>
      <span className="ml-[5px] pt-[3px]">Copy</span>
    </div>
    <div className="ml-auto mr-[14px] flex flex-col gap-[4px]">
      <div className="h-[6px] w-[28px] rounded-[2px] bg-[#6a6a6a]" />
      <div className="h-[6px] w-[28px] rounded-[2px] bg-[#6a6a6a]" />
      <div className="h-[6px] w-[28px] rounded-[2px] bg-[#6a6a6a]" />
    </div>
  </div>
);

const data = [
  ["25899010000780022", "45.806159", 2, "28.50939", "45"],
  ["25899010000780013", "25.255781", 3, "20.991753", "25"],
  ["25899010000780020", "54.566045", 1, "30.670086", "54"],
  ["25899010000780001", "66.654423", 2, "32.717983", "66"],
  ["25899010000780009", "80.387989", 1, "50.593202", "80"],
  ["25899010000780003", "91.599782", 1, "38.593313", "91"],
  ["25899010000780019", "86.775208", 2, "39.645491", "86"],
  ["25899010000780008", "63.336106", 1, "44.75801", "63"],
  ["25899010000780021", "98.891356", 1, "44.402199", "98"],
  ["25899010000780017", "38.096537", 3, "27.463861", "38"],
];

const COLS = "grid grid-cols-[63px_377px_377px_183px_281px_191px_376px_377px_195px_70px]";
const CELL = "flex items-center overflow-hidden border-b-[3px] border-r-[3px] border-[#cacaca] pt-[4px]";
const HEAD = "flex items-center overflow-hidden border-b-[2px] border-r-[2px] border-[#cecece] bg-[#ebebeb] pt-[3px]";

const Grid = () => (
  <div className="flex h-[722px] text-[#454545]">
    <div className="h-[722px] w-[2490px] overflow-hidden">
      <div className={`${COLS} h-[67px] text-[30px] font-bold tracking-[-0.600px] text-[#4a4a4a]`}>
        <div className="flex items-end justify-end border-b-[2px] border-r-[2px] border-[#cecece] bg-white pb-[9px] pr-[8px]">
          <Ico w={28} h={28}><path d="M28 0v28H0z" fill="#c9c9c9" /></Ico>
        </div>
        <div className={`${HEAD} pl-[13px] tracking-[0.150px]`}>MERGE_SRC</div>
        <div className={`${HEAD} pl-[12px]`}>terreno_pr</div>
        <div className="flex items-center border-b-[5px] border-r border-b-[#007ac2] border-r-[#8a8a8a] bg-[#c7e1f5] pl-[11px] pt-[6px]">AGm2</div>
        <div className={`${HEAD}`}><span className="-ml-[2px]">o_uni</span></div>
        <div className={`${HEAD} pl-[11px]`}>numero_pis</div>
        <div className={`${HEAD} pl-[11px]`}>numero_pre</div>
        <div className={`${HEAD} pl-[12px]`}>Reporte</div>
        <div className={`${HEAD} pl-[11px] tracking-[-0.450px]`}>Shape_Leng</div>
        <div className="flex items-center overflow-hidden border-b-[2px] border-[#cecece] bg-[#ebebeb] pl-[11px] pt-[3px]">Shap</div>
      </div>
      {data.map(([t, ag, pis, len, ar], i) => {
        const bg = i % 2 ? "bg-[#ebebeb]" : "bg-white";
        return (
          <div key={t} className={`${COLS} h-[66.200px] text-[29.500px] tracking-[-0.300px]`}>
            <div className={`flex items-center border-b-[3px] border-b-[#cacaca] pl-[12px] pt-[4px] ${i === 0 ? "border-r-[4px] border-r-[#007ac2] bg-[#c7e1f5]" : "border-r-[2px] border-r-[#cacaca] bg-[#ebebeb]"}`}>{i + 1}</div>
            <div className={`${CELL} ${bg} pl-[13px] tracking-[0.170px]`}>EDIFICACION</div>
            <div className={`${CELL} ${bg} pl-[12px]`}>{t}</div>
            <div className={`flex items-center justify-end border-b-[3px] border-r border-r-[#8a8a8a] pr-[13px] pt-[4px] ${i === 0 ? "border-b-[#cacaca] bg-[#c7e1f5]" : "border-b-[#c0dcdc] bg-[#8affff]"}`}>{ag}</div>
            <div className={`${CELL} ${bg}`} />
            <div className={`${CELL} ${bg} justify-end pr-[10px]`}>{pis}</div>
            <div className={`${CELL} ${bg}`} />
            <div className={`${CELL} ${bg}`} />
            <div className={`${CELL} ${bg} justify-end pr-[11px]`}>{len}</div>
            <div className={`flex items-center overflow-hidden border-b-[3px] border-[#cacaca] pl-[38px] pt-[4px] ${bg}`}>{ar}</div>
          </div>
        );
      })}
    </div>
    <div className="flex flex-1 flex-col items-center">
      <Chevron w={20} h={12} dir="up" className="mt-[17px]" />
      <div className="mt-[24px] h-[59px] w-[26px] rounded-full bg-[#b4b4b4]" />
      <Chevron w={20} h={12} className="mb-[17px] mt-auto" />
    </div>
  </div>
);

const Footer = () => (
  <div className="flex h-[55px] items-center pl-[1px] text-[23px] tracking-[-0.300px] text-[#4a4a4a]">
    <div className="flex h-[45px] w-[65px] items-center justify-center border-[3px] border-[#3eaee8] bg-[#c0c2c6]">
      <Ico w={30} h={26}><Rows4 fills={["#fff", "#b3e6f8", "#fff", "#b3e6f8"]} /></Ico>
    </div>
    <Ico w={30} h={20} className="-mt-[5px] ml-[20px]"><Rows4 fills={["#b3e6f8", "#b3e6f8", "#b3e6f8"]} /></Ico>
    <Ico w={19} h={18} className="ml-[36px]"><path d="M1 0v18" stroke="#bdbfc0" strokeWidth="2" /><path d="M18 0v18L4 9z" fill="#bdbfc0" /></Ico>
    <Ico w={19} h={18} className="ml-[27px]"><path d="M18 0v18" stroke="#4c4c4c" strokeWidth="2" /><path d="M0 0v18L14 9z" fill="#5c5c5c" /></Ico>
    <span className="ml-[25px] pt-[4px] tracking-[0.020px]">0 of 41,877 selected</span>
    <div className="ml-auto flex h-[55px] w-[732px] items-center">
      <span className="w-[89px] pt-[4px]">Filters:</span>
      <Ico w={30} h={30} className="-ml-[2px] opacity-70">
        <circle cx="15" cy="15" r="13" stroke="#c3c5c6" strokeWidth="2" /><path d="M15 7v8l6 4" stroke="#c3c5c6" strokeWidth="2" /><path d="M14 18h12M14 24h10" stroke="#c3c5c6" strokeWidth="3" />
      </Ico>
      <Ico w={30} h={30} className="ml-[12px] opacity-70">
        <circle cx="15" cy="15" r="13" stroke="#c3c5c6" strokeWidth="2" strokeDasharray="5 3" /><path d="M15 7v8l6 4M7 15h9" stroke="#c3c5c6" strokeWidth="2" /><path d="M16 22h12" stroke="#c3c5c6" strokeWidth="3" />
      </Ico>
      <Ico w={34} h={32} className="ml-[11px]">
        <path d="M1.500 2h22v3l-8 9v14h-5V14l-9-9z" fill="#fff" stroke="#5c5c5c" strokeWidth="2.200" />
        <path d="M3 3h19l-2 5H6z" fill="#6cb1e2" />
        <path d="M17 13h15v17H17zM17 18h15M17 24h15M22 13v17M27 13v17" fill="#b3e6f8" stroke="#5c5c5c" strokeWidth="1.800" />
      </Ico>
      <Ico w={20} h={32} className="ml-[17px]">
        <path d="M10 5v8M5 8l5-6 5 6" stroke="#e6c08a" strokeWidth="3" />
        <path d="M10 19v8M5 24l5 6 5-6" stroke="#a4d9b0" strokeWidth="3" />
        <path d="M10 12v8" stroke="#c9d9a0" strokeWidth="3" />
      </Ico>
      <div className="ml-[29px] h-[3px] w-[13px] bg-[#4c4c4c]" />
      <div className="ml-[14px] flex items-center">
        <div className="h-[3px] w-[117px] bg-[#5c5c5c]" />
        <div className="h-[22px] w-[5px] bg-[#5c5c5c]" />
        <div className="h-[3px] w-[80px] bg-[#c3c5c6]" />
      </div>
      <Ico w={16} h={16} className="ml-[13px]"><path d="M8 0v16M0 8h16" stroke="#4c4c4c" strokeWidth="3" /></Ico>
      <span className="ml-[26px] w-[88px] pt-[4px] tracking-[0.200px] text-[#1c1c1c]">140 %</span>
      <Ico w={11} h={7}><path d="M0 0h11L5.500 6.500z" fill="#4c4c4c" /></Ico>
      <Refresh className="ml-[35px]" />
    </div>
  </div>
);

const dock = [
  ["Catalog", "h-[81px]"],
  ["Modify Features", "h-[173px]"],
  ["Geoprocessing", "h-[157px]"],
  ["Symbology", "h-[119px]"],
  ["Label Class", "h-[116px]"],
  ["Chart Properties", "h-[173px]"],
];

export default function App() {
  return (
    <div className={`${FONT} flex h-[1838px] w-[3072px] flex-col overflow-hidden bg-[#ebebeb] leading-none`}>
      <div className="h-[115px] border-b-2 border-[#bfc2c6] bg-[#f7f9f8]">
        <TitleBar />
        <TabBar />
      </div>
      <div className="flex h-[1710px] pl-[11px] pt-[12px]">
        <Contents />
        <div className="ml-[12px] flex w-[2550px] flex-col">
          <PaneTab width="w-[224px]" tail="mr-[14px]" icon={<MapThumb />}>RoadBuffer</PaneTab>
          <div className="border-[2px] border-t-[6px] border-[#d2d4d8]">
            <MapCanvas />
            <MapStatus />
          </div>
          <div className="h-[12px]" />
          <PaneTab width="w-[246px]" tail="mr-[14px]" icon={<TableIcon />}>Construccion</PaneTab>
          <div className="h-[903px] border-[2px] border-t-[6px] border-[#d2d4d8] bg-[#f7f9f8]">
            <Toolbar />
            <div className="mx-[2px] mt-[2px] border-[2px] border-[#c8c8c8] bg-[#ebebeb]">
              <Grid />
              <div className="flex h-[49px] items-center pb-[2px] pl-[19px]">
                <Chevron w={11} h={19} dir="left" />
                <div className="ml-[737px] h-[26px] w-[1554px] rounded-full bg-[#b4b4b4]" />
                <Chevron w={11} h={19} dir="right" className="ml-[141px]" />
              </div>
            </div>
            <Footer />
          </div>
        </div>
        <div className="ml-auto flex w-[50px] flex-col gap-[24px] text-[23px] tracking-[-0.150px] text-[#444]">
          {dock.map(([t, h]) => (
            <div key={t} className={`flex items-center border-r-[11px] border-[#bfc1c5] ${h}`}>
              <span className="h-full whitespace-nowrap pl-[7px] [writing-mode:vertical-rl]">{t}</span>
            </div>
          ))}
        </div>
      </div>
      <div className="flex-1 border-t-2 border-[#bfc0c1] bg-[#eeeeee]" />
    </div>
  );
}
